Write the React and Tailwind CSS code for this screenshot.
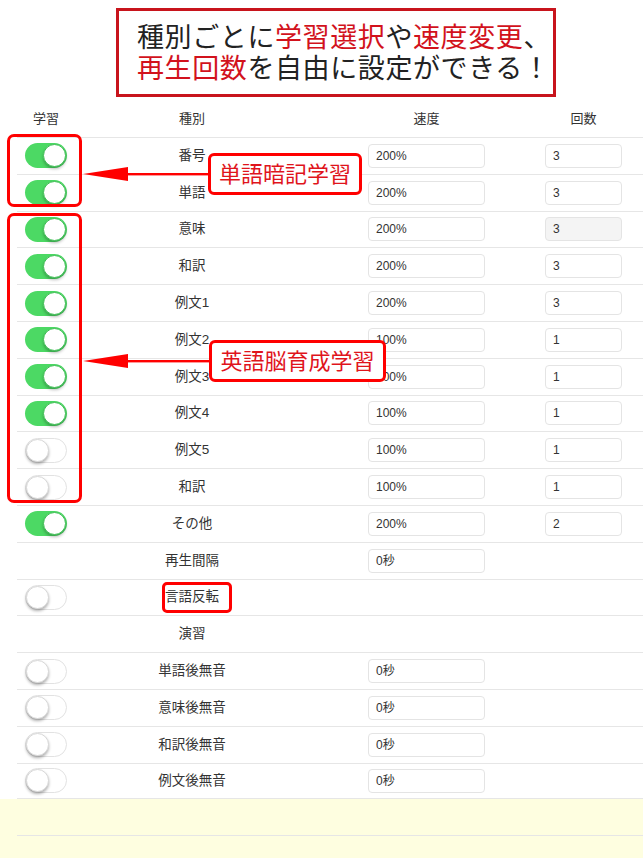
const rows = [
  { label: '番号', on: true, speed: '200%', count: '3' },
  { label: '単語', on: true, speed: '200%', count: '3' },
  { label: '意味', on: true, speed: '200%', count: '3', countDisabled: true },
  { label: '和訳', on: true, speed: '200%', count: '3' },
  { label: '例文1', on: true, speed: '200%', count: '3' },
  { label: '例文2', on: true, speed: '100%', count: '1' },
  { label: '例文3', on: true, speed: '100%', count: '1' },
  { label: '例文4', on: true, speed: '100%', count: '1' },
  { label: '例文5', on: false, speed: '100%', count: '1' },
  { label: '和訳', on: false, speed: '100%', count: '1' },
  { label: 'その他', on: true, speed: '200%', count: '2' },
  { label: '再生間隔', speed: '0秒' },
  { label: '言語反転', on: false },
  { label: '演習' },
  { label: '単語後無音', on: false, speed: '0秒' },
  { label: '意味後無音', on: false, speed: '0秒' },
  { label: '和訳後無音', on: false, speed: '0秒' },
  { label: '例文後無音', on: false, speed: '0秒' },
];

const Toggle = ({ on }) =>
  on ? (
    <div className="w-[42px] h-[25px] rounded-full bg-[#4cd964] flex items-center justify-end pr-[1px]">
      <div className="w-[23px] h-[23px] rounded-full bg-white border border-[#3fbf55] shadow-[0_2px_3px_rgba(0,0,0,0.25)]" />
    </div>
  ) : (
    <div className="w-[42px] h-[25px] rounded-full bg-white border border-[#e2e2e2] flex items-center">
      <div className="w-[23px] h-[23px] rounded-full bg-white border border-[#d8d8d8] shadow-[0_2px_3px_rgba(0,0,0,0.3)]" />
    </div>
  );

const Field = ({ value, width, disabled }) => (
  <div
    className={`h-[24px] rounded-[4px] border border-[#e4e4e4] flex items-center pl-[7px] text-[12px] text-[#333] ${width} ${
      disabled ? 'bg-[#f4f4f4]' : 'bg-white'
    }`}
  >
    {value}
  </div>
);

const Row = ({ row, last }) => (
  <div className={`flex items-center h-[36.8px] border-t border-[#e6e6e6] ${last ? 'border-b' : ''}`}>
    <div className="w-[75px] pl-[8px]">{row.on !== undefined && <Toggle on={row.on} />}</div>
    <div className="w-[200px] text-center text-[13.5px] text-[#333]">{row.label}</div>
    <div className="w-[253px] pl-[76px]">{row.speed && <Field value={row.speed} width="w-[117px]" />}</div>
    <div className="w-[98px]">
      {row.count && <Field value={row.count} width="w-[77px]" disabled={row.countDisabled} />}
    </div>
  </div>
);

const Arrow = ({ top, width }) => (
  <svg className="absolute left-[83px]" style={{ top }} width={width} height="16" viewBox={`0 0 ${width} 16`}>
    <polygon points="0,8 45,1 45,15" fill="#ff0000" />
    <rect x="40" y="7" width={width - 40} height="2.4" fill="#ff0000" />
  </svg>
);

export default function App() {
  const red = 'text-[#d2121c]';
  return (
    <div
      className="relative w-[643px] h-[858px] bg-white overflow-hidden flex flex-col"
      style={{ fontFamily: '"Liberation Sans", "Noto Sans CJK JP", sans-serif' }}
    >
      <div className="h-[100px] pl-[116px] pt-[8px]">
        <div className="w-[440px] h-[89px] border-[3px] border-[#c8141c] pl-[18px] pt-[12px] text-[27px] leading-[31px] text-[#222] tracking-[0.6px]">
          <div>
            種別ごとに<span className={red}>学習選択</span>や<span className={red}>速度変更</span>、
          </div>
          <div>
            <span className={red}>再生回数</span>を自由に設定ができる！
          </div>
        </div>
      </div>

      <div className="ml-[17px]">
        <div className="flex items-center h-[37px] text-[13px] text-[#333]">
          <div className="w-[75px] pl-[16px]">学習</div>
          <div className="w-[200px] text-center">種別</div>
          <div className="w-[253px] pl-[76px]">
            <div className="w-[117px] text-center">速度</div>
          </div>
          <div className="w-[98px]">
            <div className="w-[77px] text-center">回数</div>
          </div>
        </div>
        {rows.map((row, i) => (
          <Row key={i} row={row} last={i === rows.length - 1} />
        ))}
      </div>

      <div className="flex-1 bg-[#fefee0]">
        <div className="ml-[17px] h-[37px] border-b border-[#e6e6e6]" />
      </div>

      {/* annotations */}
      <div className="absolute left-[7px] top-[134px] w-[75px] h-[73px] border-[3px] border-[#ff0000] rounded-[7px]" />
      <div className="absolute left-[7px] top-[213px] w-[75px] h-[290px] border-[3px] border-[#ff0000] rounded-[7px]" />

      <Arrow top={166} width={126} />
      <div className="absolute left-[208px] top-[153px] w-[154px] h-[42px] border-[3px] border-[#ff0000] rounded-[6px] bg-white flex items-center justify-center text-[22px] text-[#e0141c]">
        単語暗記学習
      </div>

      <Arrow top={353} width={127} />
      <div className="absolute left-[209px] top-[340px] w-[177px] h-[42px] border-[3px] border-[#ff0000] rounded-[6px] bg-white flex items-center justify-center text-[22px] text-[#e0141c]">
        英語脳育成学習
      </div>

      <div className="absolute left-[162px] top-[582px] w-[70px] h-[31px] border-[3px] border-[#ff0000] rounded-[5px]" />
    </div>
  );
}
